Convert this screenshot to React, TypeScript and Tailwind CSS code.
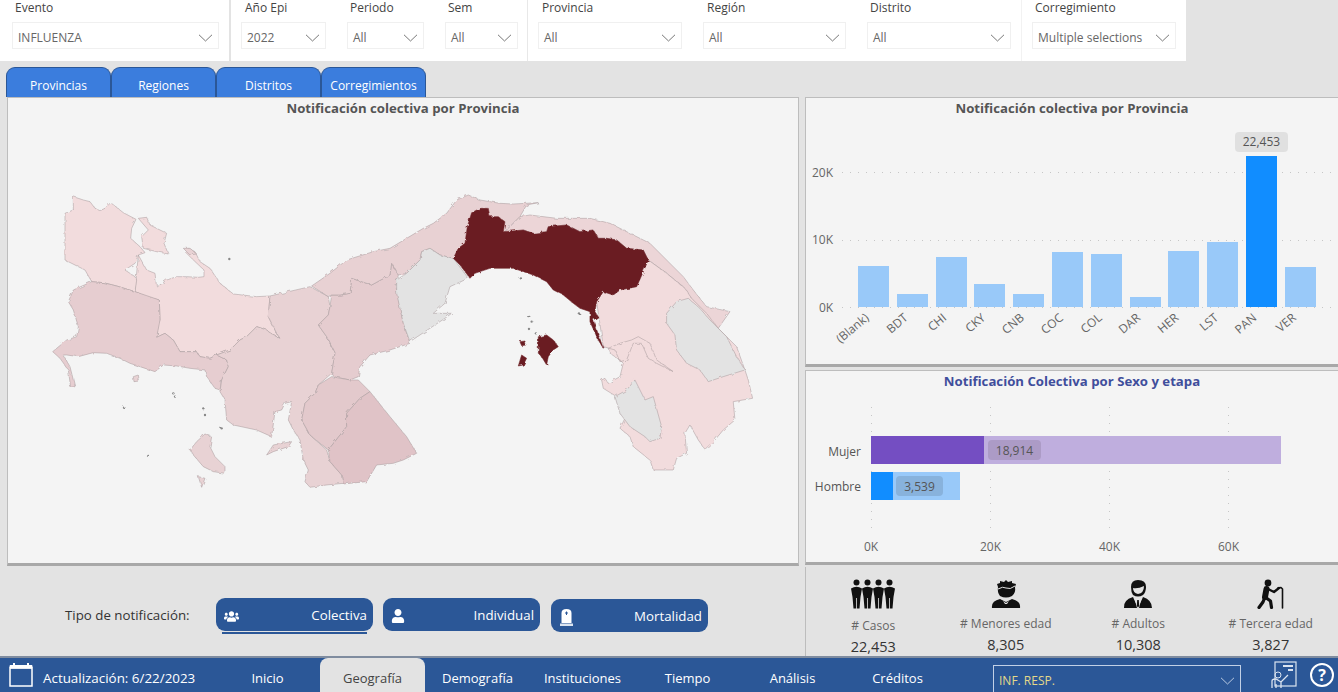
import { FaUser, FaUsers } from 'react-icons/fa'

// Province shapes traced over the map, in units of a third of a pixel
const regions = [
  { fill: '#f2dcdd', pts: '285,335 295,225 320,270 345,280 350,322 380,300 410,290 440,290 475,292 492,290 492,270 460,240 435,215 445,205 465,215 480,245 510,265 540,310 580,342 650,350 690,348 685,410 710,460 720,475 700,465 680,450 650,440 620,470 600,480 570,510 530,525 510,535 480,530 470,515 420,515 400,480 375,460 350,472 355,430 360,420 358,360 320,350' },
  { fill: '#f2dcdd', pts: '100,50 130,60 150,65 165,85 180,92 195,85 212,68 250,98 288,118 275,145 272,175 300,200 315,218 295,225 285,250 255,270 285,290 290,300 285,335 230,318 190,308 155,305 135,270 105,255 75,240 75,100 100,90' },
  { fill: '#f2dcdd', pts: '295,115 320,112 330,135 350,145 380,160 372,190 385,222 350,215 310,205 305,170 325,150' },
  { fill: '#e6cdd0', pts: '155,305 190,308 230,318 285,335 358,360 360,420 350,472 375,460 400,480 420,515 470,515 480,530 510,535 530,525 560,540 565,560 545,600 540,630 525,625 500,590 495,570 450,565 410,558 370,555 345,575 300,560 270,550 240,535 200,520 160,518 115,530 80,525 70,525 90,560 100,600 105,620 92,622 85,570 60,535 38,515 80,480 110,470 115,440 100,390 85,365 100,330' },
  { fill: '#e8d2d4', pts: '690,348 810,320 865,350 870,380 865,405 835,435 860,470 885,520 875,580 835,615 825,640 795,670 785,720 810,765 860,810 870,845 905,885 910,910 860,915 810,922 795,905 805,870 790,840 780,780 760,750 745,720 755,665 735,670 725,690 705,695 695,770 650,750 580,735 560,720 555,660 540,635 545,600 565,560 560,540 530,525 570,510 600,480 620,470 650,440 680,450 700,465 720,475 710,460 685,410' },
  { fill: '#e8d2d4', pts: '495,762 515,770 510,800 525,830 555,860 555,880 520,875 490,860 460,825 450,810 470,785' },
  { fill: '#e8d2d4', pts: '475,890 495,895 485,922' },
  { fill: '#e8d2d4', pts: '680,825 700,795 755,785 745,800 700,815' },
  { fill: '#e8d2d4', pts: '280,590 295,585 298,603 282,605' },
  { fill: '#e8d2d4', pts: '430,205 450,205 470,222 450,225' },
  { fill: '#e5cccf', pts: '875,345 900,345 930,340 935,295 995,315 1050,285 1055,250 1075,285 1068,320 1090,430 1110,490 1050,510 990,525 960,560 955,590 930,600 880,590 875,580 885,520 860,470 835,435 865,405 870,380' },
  { fill: '#e3c9cc', pts: '875,590 930,600 955,600 990,635 960,655 920,700 920,740 865,810 810,765 785,720 795,670 825,640 835,615' },
  { fill: '#e0c3c7', pts: '990,635 1010,660 1050,710 1100,770 1130,820 1090,840 1060,850 1010,855 980,905 910,912 905,885 870,845 865,810 920,740 920,700 960,655' },
  { fill: '#e8d1d3', pts: '815,318 870,280 920,240 1000,215 1050,205 1100,175 1150,145 1180,130 1220,100 1250,60 1285,45 1320,60 1380,70 1420,72 1495,68 1460,75 1440,110 1390,160 1300,200 1240,235 1200,225 1170,205 1145,215 1140,240 1100,280 1075,285 1055,250 1050,285 995,315 935,295 930,340 900,345 875,345 865,350' },
  { fill: '#e3e3e3', pts: '1070,300 1100,280 1140,240 1145,215 1170,205 1200,225 1240,235 1285,295 1230,320 1215,370 1180,400 1235,400 1215,415 1110,485 1090,430 1070,340' },
  { fill: '#ecd5d7', pts: '1390,160 1440,110 1470,105 1550,115 1650,115 1710,130 1780,165 1830,190 1880,240 1930,290 1960,330 2000,380 2070,395 2035,445 1995,400 1950,350 1930,320 1880,280 1825,240 1810,210 1760,205 1730,180 1700,175 1675,175 1660,150 1620,155 1580,135 1525,140 1520,155 1480,160 1450,150' },
  { fill: '#f2dcdd', pts: '1825,240 1880,280 1935,325 1955,355 2000,400 2035,445 2090,500 2115,570 2125,600 2138,655 2080,665 2085,720 2050,750 2025,780 1995,808 1975,780 1950,735 1935,760 1940,820 1910,835 1900,870 1840,870 1830,840 1780,800 1770,770 1740,745 1760,705 1730,650 1690,625 1685,600 1695,595 1705,610 1740,590 1750,550 1740,540 1710,520 1705,505 1740,490 1775,480 1795,470 1830,490 1850,540 1900,575 1850,550 1825,535 1805,490 1780,490 1760,540 1740,545 1725,510 1690,500 1670,365 1690,335 1720,345 1740,330 1790,320 1810,275' },
  { fill: '#e3e3e3', pts: '1880,400 1910,365 1945,355 1980,385 2010,420 2060,470 2090,530 2115,570 2050,590 2005,605 1980,570 1940,550 1910,510 1905,465 1880,430' },
  { fill: '#e3e3e3', pts: '1725,650 1760,630 1785,600 1815,660 1840,650 1865,740 1860,775 1830,785 1815,770 1770,740 1740,700' },
]

const panama = [
  '1295,98 1320,85 1345,85 1350,110 1375,110 1395,125 1390,155 1450,150 1480,160 1520,155 1525,140 1580,135 1620,155 1660,150 1675,175 1700,175 1730,180 1760,205 1810,210 1825,240 1810,275 1790,320 1740,330 1720,345 1690,335 1670,365 1665,395 1675,410 1660,420 1690,505 1675,480 1650,425 1650,395 1620,385 1600,370 1570,345 1540,330 1520,305 1480,285 1420,265 1350,265 1305,280 1290,295 1260,255 1240,235 1255,205 1275,190 1282,140',
  '1495,470 1520,465 1540,480 1555,500 1540,510 1525,530 1520,555 1505,530 1495,520',
  '1440,485 1455,483 1458,495 1445,497',
  '1445,525 1460,535 1450,555 1435,558',
]

const specks = [
  [1465, 408], [1475, 425], [1470, 450], [1488, 460], [1440, 292], [1617, 400],
  [400, 640], [405, 650], [490, 685], [495, 705], [545, 745], [322, 825], [568, 237], [252, 683],
]

const bars = [
  { label: '(Blank)', height: 'h-[41px]' },
  { label: 'BDT', height: 'h-[13px]' },
  { label: 'CHI', height: 'h-[50px]' },
  { label: 'CKY', height: 'h-[23px]' },
  { label: 'CNB', height: 'h-[13px]' },
  { label: 'COC', height: 'h-[55px]' },
  { label: 'COL', height: 'h-[53px]' },
  { label: 'DAR', height: 'h-[10px]' },
  { label: 'HER', height: 'h-[56px]' },
  { label: 'LST', height: 'h-[65px]' },
  { label: 'PAN', height: 'h-[151px]', active: true },
  { label: 'VER', height: 'h-[40px]' },
]

const navItems = ['Inicio', 'Geografía', 'Demografía', 'Instituciones', 'Tiempo', 'Análisis', 'Créditos']

const hDots = 'absolute right-[2px] left-[36px] h-px bg-[repeating-linear-gradient(90deg,#c6c6c6_0_1px,transparent_1px_8px)]'
const vDots = 'absolute top-[36px] h-[127px] w-px bg-[repeating-linear-gradient(180deg,#c6c6c6_0_1px,transparent_1px_8px)]'

const Chevron = ({ className = 'text-[#777]' }: { className?: string }) => (
  <svg width="15" height="8" viewBox="0 0 15 8" fill="none" stroke="currentColor" className={className}>
    <path d="M1 .8 7.5 7 14 .8" />
  </svg>
)

const Filter = ({ label, value, width, offset = 'pl-[2px]' }: { label: string; value: string; width: string; offset?: string }) => (
  <div className={`flex flex-col ${width}`}>
    <div className={`h-[22px] text-[12px] leading-[15px] text-[#444] ${offset}`}>{label}</div>
    <div className="flex h-[27px] items-center justify-between border border-[#f0f0f0] pt-[4px] pr-[5px] pl-[5px] text-[12px] text-[#666]">
      {value}
      <Chevron />
    </div>
  </div>
)

const CasesIcon = () => (
  <svg width="44" height="30" viewBox="0 0 44 30" fill="#111">
    {[5.5, 16.5, 27.5, 38.5].map((x) => (
      <g key={x}>
        <circle cx={x} cy="3.6" r="3" />
        <path d={`M${x - 5.5} 9.5 Q${x} 6 ${x + 5.5} 9.5 L${x + 4} 18 L${x + 3} 29.5 L${x + .4} 29.5 L${x + .4} 19 L${x - .4} 19 L${x - .4} 29.5 L${x - 3} 29.5 L${x - 4} 18 Z`} />
      </g>
    ))}
  </svg>
)

const KidIcon = () => (
  <svg width="30" height="30" viewBox="0 0 30 30" fill="#111">
    <path d="M7 8 L6 5 L9 4 L9 2 L13 3 L15 1 L17 3 L21 2 L21 4 L25 5 L24 8 Q25 14 21 17 Q15 20 9 17 Q6 13 7 8 Z" />
    <path d="M7 10 Q12 7 15 9 Q19 11 24 7" stroke="#e3e3e3" strokeWidth="1" fill="none" />
    <path d="M1 29 Q0 22 9 20 L15 23 L21 20 Q30 22 29 29 Z" />
    <path d="M12 22 L15 24 L18 22 L16 25 L14 25 Z" fill="#e3e3e3" />
  </svg>
)

const AdultIcon = () => (
  <svg width="30" height="30" viewBox="0 0 30 30" fill="#111">
    <path d="M8 8 Q8 1 15 1 Q23 1 23 8 Q23 13 20 16 Q15 19 10 16 Q8 13 8 8 Z" />
    <path d="M10 9 Q15 10 21 7 Q21 14 15 15 Q10 14 10 9 Z" fill="#e3e3e3" />
    <path d="M1 29 Q0 21 10 18 L15 29 L20 18 Q29 21 29 29 Z" />
    <path d="M11.5 19 L15 20 L18.5 19 L16 29 L14 29 Z" fill="#e3e3e3" />
    <path d="M14.2 21 h1.6 l.4 6 -1.2 1.4 -1.2 -1.4 Z" />
  </svg>
)

const ElderIcon = () => (
  <svg width="30" height="30" viewBox="0 0 30 30" fill="none" stroke="#111" strokeLinecap="round" strokeLinejoin="round">
    <circle cx="12" cy="4" r="3.4" fill="#111" stroke="none" />
    <path d="M10.500 10 L9 18" strokeWidth="6" />
    <path d="M12 10 L18 13 L23 9" strokeWidth="2.400" />
    <path d="M9 18 L14.500 22 L15.500 28.500 M9 18 L7 23 L3 28.500" strokeWidth="3.200" />
    <path d="M22 9 L25 8.500 L26.500 10 V29" strokeWidth="1.600" />
  </svg>
)

const Kpi = ({ icon, label, value, low = false }: { icon: React.ReactNode; label: string; value: string; low?: boolean }) => (
  <div className="flex w-[132.5px] flex-col items-center">
    <div className="flex h-[30px] items-center justify-center">{icon}</div>
    <div className={`${low ? 'mt-[8px]' : 'mt-[6px]'} text-[12px] leading-[17px] text-[#666]`}>{label}</div>
    <div className="mt-[3px] text-[14.5px] leading-[20px] text-[#333]">{value}</div>
  </div>
)

const NotifButton = ({ icon, label, active = false, className = '' }: { icon: React.ReactNode; label: string; active?: boolean; className?: string }) => (
  <div className={`flex w-[157px] flex-col ${className}`}>
    <div className="flex h-[33px] items-center justify-between rounded-[9px] bg-[#2b5797] pt-[3px] pr-[6px] pl-[8px] text-[13.3px] text-white">
      {icon}
      <span>{label}</span>
    </div>
    {active && <div className="mx-[6px] mt-[1px] h-[2px] bg-[#2b5797]" />}
  </div>
)

const Tab = ({ label }: { label: string }) => (
  <div className="flex h-[30px] w-[105px] items-center justify-center rounded-t-[9px] border-t border-r border-l border-[#2b5797] bg-[#3b7ddd] pt-[6px] text-[12px] text-white">
    {label}
  </div>
)

export default function App() {
  return (
    <div className="flex h-[692px] w-[1338px] flex-col overflow-hidden bg-[#e3e3e3] font-['Open_Sans',sans-serif]">
      {/* Filters */}
      <div className="flex h-[61px] w-[1186px] shrink-0 bg-white">
        <div className="flex w-[229px] pl-[12px]">
          <Filter label="Evento" value="INFLUENZA" width="w-[207px]" offset="pl-[3px]" />
        </div>
        <div className="w-[2px] bg-[#e3e3e3]" />
        <div className="flex w-[296px] gap-[21px] pl-[10px]">
          <Filter label="Año Epi" value="2022" width="w-[85px]" offset="pl-[4px]" />
          <Filter label="Periodo" value="All" width="w-[77px]" offset="pl-[3px]" />
          <Filter label="Sem" value="All" width="w-[73px]" offset="pl-[3px]" />
        </div>
        <div className="w-px bg-[#e8e8e8]" />
        <div className="flex flex-1 pl-[10px]">
          <Filter label="Provincia" value="All" width="w-[144px]" offset="pl-[4px]" />
          <div className="ml-[21px] flex gap-[21px]">
            <Filter label="Región" value="All" width="w-[143px]" offset="pl-[4px]" />
            <Filter label="Distrito" value="All" width="w-[144px]" offset="pl-[3px]" />
          </div>
          <div className="ml-[10px] w-px bg-[#f2f2f2]" />
          <div className="ml-[10px]">
            <Filter label="Corregimiento" value="Multiple selections" width="w-[144px]" offset="pl-[3px]" />
          </div>
        </div>
      </div>

      {/* Tabs */}
      <div className="flex h-[36px] shrink-0 items-end pl-[6px]">
        <Tab label="Provincias" />
        <Tab label="Regiones" />
        <Tab label="Distritos" />
        <Tab label="Corregimientos" />
      </div>

      <div className="flex h-[559px] shrink-0">
        {/* Left column */}
        <div className="flex w-[805px] flex-col pl-[7px]">
          <div className="flex h-[469px] w-[792px] flex-col items-center border border-b-[3px] border-[#bdbdbd] border-b-[#a8a8a8] bg-[#f4f4f4]">
            <div className="text-[13.2px] leading-[20px] font-bold text-[#555]">Notificación colectiva por Provincia</div>
            <svg width="790" height="445" viewBox="8 118 790 445" className="shrink-0">
              <defs>
                <filter id="coast" x="0" y="0" width="100%" height="100%">
                  <feTurbulence type="fractalNoise" baseFrequency="0.22" numOctaves="2" seed="4" />
                  <feDisplacementMap in="SourceGraphic" scale="3.5" />
                </filter>
              </defs>
              <g filter="url(#coast)">
                <g transform="translate(40 180) scale(.3333)" stroke="#a99b9d" strokeWidth="1.6" strokeLinejoin="round">
                  {regions.map((r, i) => (
                    <polygon key={i} points={r.pts} fill={r.fill} />
                  ))}
                  {panama.map((p, i) => (
                    <polygon key={i} points={p} fill="#6b1f24" stroke="#6b1f24" />
                  ))}
                  {specks.map(([x, y]) => (
                    <circle key={`${x}-${y}`} cx={x} cy={y} r="3.5" fill="#888" stroke="none" />
                  ))}
                </g>
              </g>
            </svg>
          </div>
          <div className="flex flex-1 items-start pt-[32px] pl-[58px]">
            <div className="mt-[9px] w-[151px] text-[13.3px] leading-[16px] text-[#333]">Tipo de notificación:</div>
            <div className="flex gap-[10px]">
              <NotifButton active label="Colectiva" icon={<FaUsers className="text-[15px] text-white" />} />
              <NotifButton label="Individual" icon={<FaUser className="text-[14px] text-white" />} />
              <NotifButton
                className="mt-[1px] ml-[1px]"
                label="Mortalidad"
                icon={
                  <svg width="15" height="18" viewBox="0 0 15 18" fill="#fff">
                    <path d="M2.5 15 V5 Q2.5 1 7.500 1 Q12.500 1 12.500 5 V15 Z" />
                    <path d="M7.500 3.500 V7 M6 5 H9" stroke="#2b5797" />
                    <rect x="1" y="15.500" width="13" height="2.500" fill="#dbe4f0" />
                  </svg>
                }
              />
            </div>
          </div>
        </div>

        {/* Right column */}
        <div className="flex flex-1 flex-col">
          <div className="relative flex h-[270px] shrink-0 flex-col border-t border-l border-[#bdbdbd] border-b-[3px] border-b-[#a8a8a8] bg-[#f4f4f4]">
            <div className="text-center text-[13.2px] leading-[20px] font-bold text-[#555]">Notificación colectiva por Provincia</div>
            {/* Grid lines */}
            <div className={`${hDots} top-[74px]`} />
            <div className={`${hDots} top-[142px]`} />
            <div className={`${hDots} top-[209px]`} />
            <div className="absolute top-[67px] left-[6px] text-[12px] leading-[16px] text-[#666]">20K</div>
            <div className="absolute top-[134px] left-[6px] text-[12px] leading-[16px] text-[#666]">10K</div>
            <div className="absolute top-[202px] left-[13px] text-[12px] leading-[16px] text-[#666]">0K</div>
            <div className="relative mt-[37px] flex h-[152px] items-end gap-[7.8px] pl-[52px]">
              {bars.map((b) => (
                <div key={b.label} className="relative w-[31px]">
                  {b.active && (
                    <div className="absolute bottom-[155px] -left-[11px] flex h-[20px] w-[53px] items-center justify-center rounded-[4px] bg-[#e0e0e0] text-[12px] text-[#555]">
                      22,453
                    </div>
                  )}
                  <div className={`${b.height} ${b.active ? 'bg-[#118dff]' : 'bg-[#99c9f9]'}`} />
                </div>
              ))}
            </div>
            <div className="flex gap-[7.8px] pl-[52px]">
              {bars.map((b) => (
                <div key={b.label} className="relative h-[40px] w-[31px]">
                  <div className="absolute top-[2px] right-[22px] origin-right -rotate-[40deg] text-[12px] leading-[14px] whitespace-nowrap text-[#666]">
                    {b.label}
                  </div>
                </div>
              ))}
            </div>
          </div>

          <div className="relative mt-[3px] h-[195px] shrink-0 border-t border-l border-[#bdbdbd] border-b-[3px] border-b-[#a8a8a8] bg-[#f4f4f4]">
            <div className="text-center text-[13.2px] leading-[20px] font-bold text-[#3f4e9c]">Notificación Colectiva por Sexo y etapa</div>
            <div className={`${vDots} left-[65px]`} />
            <div className={`${vDots} left-[184px]`} />
            <div className={`${vDots} left-[303px]`} />
            <div className={`${vDots} left-[422px]`} />
            <div className="mt-[45px] flex flex-col gap-[8px]">
              <div className="flex items-center">
                <div className="w-[55px] pt-[3px] text-right text-[12px] text-[#555]">Mujer</div>
                <div className="relative ml-[10px] flex h-[28px] w-[410px] bg-[#bfaede]">
                  <div className="w-[113px] bg-[#744ec2]" />
                  <div className="absolute top-[4px] left-[117px] flex h-[20px] w-[53px] items-center justify-center rounded-[4px] bg-[#ac9bc6] pt-[2px] text-[12px] text-[#555]">
                    18,914
                  </div>
                </div>
              </div>
              <div className="flex items-center">
                <div className="w-[55px] pt-[1px] text-right text-[12px] text-[#555]">Hombre</div>
                <div className="relative ml-[10px] flex h-[28px] w-[89px] bg-[#99c9f9]">
                  <div className="w-[22px] bg-[#118dff]" />
                  <div className="absolute top-[4px] left-[25px] flex h-[20px] w-[47px] items-center justify-center rounded-[4px] bg-[#88b2dc] pt-[2px] text-[12px] text-[#555]">
                    3,539
                  </div>
                </div>
              </div>
            </div>
            <div className="absolute top-[168px] left-[58px] text-[12px] leading-[16px] text-[#666]">0K</div>
            <div className="absolute top-[168px] left-[174px] text-[12px] leading-[16px] text-[#666]">20K</div>
            <div className="absolute top-[168px] left-[293px] text-[12px] leading-[16px] text-[#666]">40K</div>
            <div className="absolute top-[168px] left-[412px] text-[12px] leading-[16px] text-[#666]">60K</div>
          </div>

          <div className="mt-[2px] flex flex-1 border-l border-[#bdbdbd] pt-[12px] pl-[1px]">
            <Kpi low label="# Casos" value="22,453" icon={<CasesIcon />} />
            <Kpi label="# Menores edad" value="8,305" icon={<KidIcon />} />
            <Kpi label="# Adultos" value="10,308" icon={<AdultIcon />} />
            <Kpi label="# Tercera edad" value="3,827" icon={<ElderIcon />} />
          </div>
        </div>
      </div>

      {/* Bottom nav */}
      <div className="flex h-[36px] shrink-0 items-stretch border-t-2 border-[#7f8c9f] bg-[#2b5797] text-[13px] text-white">
        <div className="flex w-[215px] items-center pl-[9px]">
          <svg width="24" height="26" viewBox="0 0 24 26" fill="none" stroke="#fff">
            <rect x="1" y="6" width="22" height="18" strokeWidth="1.500" />
            <path d="M1 6 V3.500 H23 V6 Z" fill="#fff" />
            <path d="M5 1 V5 M19 1 V5" strokeWidth="2" />
          </svg>
          <span className="ml-[10px] pt-[6px] text-[13.4px] whitespace-nowrap">Actualización: 6/22/2023</span>
        </div>
        {navItems.map((item) => (
          <div
            key={item}
            className={
              item === 'Geografía'
                ? 'flex w-[105px] items-center justify-center rounded-t-[8px] bg-[#e3e3e3] pt-[8px] text-[#444]'
                : 'flex w-[105px] items-center justify-center pt-[8px]'
            }
          >
            {item}
          </div>
        ))}
        <div className="ml-[43px] flex h-[27px] w-[248px] items-center justify-between self-end border-t border-r border-l border-[#c2d0e6] pt-[3px] pr-[5px] pl-[5px] text-[12px] text-[#e4d98a]">
          INF. RESP.
          <Chevron className="text-[#b9c9e0]" />
        </div>
        <div className="ml-[30px] flex items-center">
          <svg width="26" height="28" viewBox="0 0 26 28" fill="none" stroke="#dbe4f0">
            <rect x="4" y="1" width="21" height="24" strokeWidth="1.200" />
            <path d="M12 5 H22 M17 9 H22" strokeWidth="2" />
            <circle cx="7" cy="14" r="3" />
            <path d="M1 27 V20 Q1 18 5 18 L10 21 L17 14 M10 21 V27 M5 23 V27" strokeWidth="1.300" />
          </svg>
        </div>
        <div className="ml-[13px] flex items-center">
          <div className="flex h-[24px] w-[24px] items-center justify-center rounded-full border-2 border-white text-[16px] leading-none font-bold">?</div>
        </div>
      </div>
    </div>
  )
}
